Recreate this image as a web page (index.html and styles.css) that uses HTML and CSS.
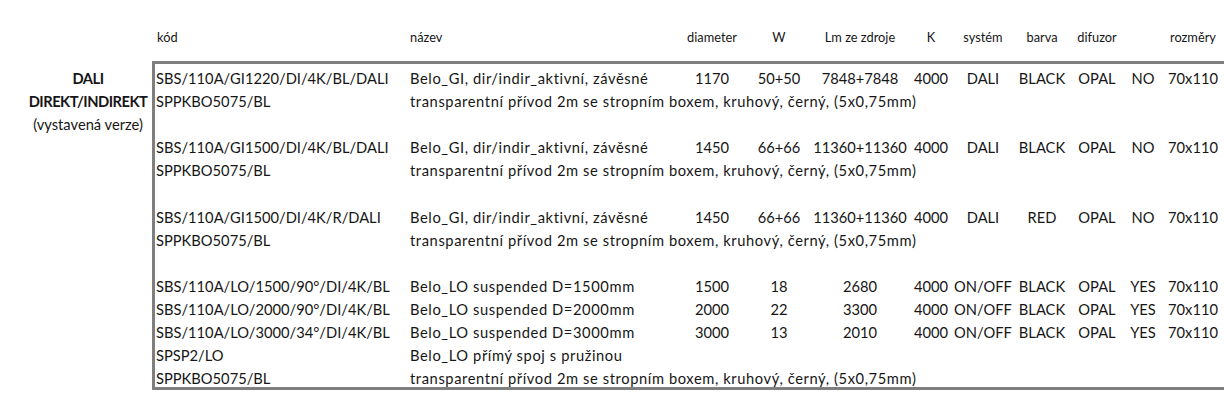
FILE: index.html
```html
<!DOCTYPE html>
<html lang="cs">
<head>
<meta charset="utf-8">
<title>DALI direkt/indirekt</title>
<link rel="stylesheet" href="styles.css">
</head>
<body>
<div class="page">
  <div class="head">
    <div class="h-spacer"></div>
    <div class="h left kod">kód</div>
    <div class="h left naz">název</div>
    <div class="h">diameter</div>
    <div class="h">W</div>
    <div class="h">Lm ze zdroje</div>
    <div class="h">K</div>
    <div class="h">systém</div>
    <div class="h">barva</div>
    <div class="h">difuzor</div>
    <div class="h"></div>
    <div class="h">rozměry</div>
  </div>

  <div class="main">
    <div class="label">
      <div class="lab bold">DALI</div>
      <div class="lab bold">DIREKT/INDIREKT</div>
      <div class="lab">(vystavená verze)</div>
    </div>

    <div class="box">
      <div class="row">
        <div class="c kod">SBS/110A/GI1220/DI/4K/BL/DALI</div>
        <div class="c naz">Belo_GI, dir/indir_aktivní, závěsné</div>
        <div class="c num">1170</div>
        <div class="c num">50+50</div>
        <div class="c num">7848+7848</div>
        <div class="c num">4000</div>
        <div class="c num">DALI</div>
        <div class="c num">BLACK</div>
        <div class="c num">OPAL</div>
        <div class="c num">NO</div>
        <div class="c num">70x110</div>
      </div>
      <div class="row">
        <div class="c kod">SPPKBO5075/BL</div>
        <div class="c naz wide">transparentní přívod 2m se stropním boxem, kruhový, černý, (5x0,75mm)</div>
      </div>
      <div class="row"></div>

      <div class="row">
        <div class="c kod">SBS/110A/GI1500/DI/4K/BL/DALI</div>
        <div class="c naz">Belo_GI, dir/indir_aktivní, závěsné</div>
        <div class="c num">1450</div>
        <div class="c num">66+66</div>
        <div class="c num">11360+11360</div>
        <div class="c num">4000</div>
        <div class="c num">DALI</div>
        <div class="c num">BLACK</div>
        <div class="c num">OPAL</div>
        <div class="c num">NO</div>
        <div class="c num">70x110</div>
      </div>
      <div class="row">
        <div class="c kod">SPPKBO5075/BL</div>
        <div class="c naz wide">transparentní přívod 2m se stropním boxem, kruhový, černý, (5x0,75mm)</div>
      </div>
      <div class="row"></div>

      <div class="row">
        <div class="c kod">SBS/110A/GI1500/DI/4K/R/DALI</div>
        <div class="c naz">Belo_GI, dir/indir_aktivní, závěsné</div>
        <div class="c num">1450</div>
        <div class="c num">66+66</div>
        <div class="c num">11360+11360</div>
        <div class="c num">4000</div>
        <div class="c num">DALI</div>
        <div class="c num">RED</div>
        <div class="c num">OPAL</div>
        <div class="c num">NO</div>
        <div class="c num">70x110</div>
      </div>
      <div class="row">
        <div class="c kod">SPPKBO5075/BL</div>
        <div class="c naz wide">transparentní přívod 2m se stropním boxem, kruhový, černý, (5x0,75mm)</div>
      </div>
      <div class="row"></div>

      <div class="row">
        <div class="c kod">SBS/110A/LO/1500/90°/DI/4K/BL</div>
        <div class="c naz">Belo_LO suspended D=1500mm</div>
        <div class="c num">1500</div>
        <div class="c num">18</div>
        <div class="c num">2680</div>
        <div class="c num">4000</div>
        <div class="c num">ON/OFF</div>
        <div class="c num">BLACK</div>
        <div class="c num">OPAL</div>
        <div class="c num">YES</div>
        <div class="c num">70x110</div>
      </div>
      <div class="row">
        <div class="c kod">SBS/110A/LO/2000/90°/DI/4K/BL</div>
        <div class="c naz">Belo_LO suspended D=2000mm</div>
        <div class="c num">2000</div>
        <div class="c num">22</div>
        <div class="c num">3300</div>
        <div class="c num">4000</div>
        <div class="c num">ON/OFF</div>
        <div class="c num">BLACK</div>
        <div class="c num">OPAL</div>
        <div class="c num">YES</div>
        <div class="c num">70x110</div>
      </div>
      <div class="row">
        <div class="c kod">SBS/110A/LO/3000/34°/DI/4K/BL</div>
        <div class="c naz">Belo_LO suspended D=3000mm</div>
        <div class="c num">3000</div>
        <div class="c num">13</div>
        <div class="c num">2010</div>
        <div class="c num">4000</div>
        <div class="c num">ON/OFF</div>
        <div class="c num">BLACK</div>
        <div class="c num">OPAL</div>
        <div class="c num">YES</div>
        <div class="c num">70x110</div>
      </div>
      <div class="row">
        <div class="c kod">SPSP2/LO</div>
        <div class="c naz wide">Belo_LO přímý spoj s pružinou</div>
      </div>
      <div class="row">
        <div class="c kod">SPPKBO5075/BL</div>
        <div class="c naz wide">transparentní přívod 2m se stropním boxem, kruhový, černý, (5x0,75mm)</div>
      </div>
    </div>
  </div>
</div>
</body>
</html>
```

FILE: styles.css
```css
html, body {
  margin: 0;
  padding: 0;
  background: #ffffff;
}

body {
  width: 1224px;
  height: 401px;
  overflow: hidden;
  font-family: "Lato", "Liberation Sans", sans-serif;
  color: #161616;
}

.page {
  width: 1224px;
}

/* header row */
.head {
  display: grid;
  grid-template-columns: 155px 253px 272px 64px 70px 92px 50px 54px 64px 46px 46px 54px 1fr;
  height: 61px;
  box-sizing: border-box;
  padding-bottom: 16px;
  align-items: end;
  font-size: 12.8px;
  line-height: 15px;
}

.h {
  display: flex;
  justify-content: center;
  white-space: nowrap;
}

.h.left {
  justify-content: flex-start;
}

.h.kod {
  padding-left: 2px;
}

.h.naz {
  padding-left: 2px;
}

/* body */
.main {
  display: grid;
  grid-template-columns: 152px 1fr;
}

.label {
  padding-top: 3px;
  padding-left: 29px;
  padding-right: 5px;
  font-size: 14.7px;
  line-height: 17px;
}

.lab {
  height: 23.1px;
  display: flex;
  align-items: flex-end;
  justify-content: center;
  white-space: nowrap;
}

.lab.bold {
  font-weight: 700;
  letter-spacing: -0.5px;
}

.box {
  border-top: 3px solid #7f7f7f;
  border-left: 3px solid #7f7f7f;
  border-bottom: 3px solid #7f7f7f;
  font-size: 14.7px;
  line-height: 17px;
}

.row {
  display: grid;
  grid-template-columns: 253px 272px 64px 70px 92px 50px 54px 64px 46px 46px 54px 1fr;
  height: 23.1px;
  align-items: end;
}

.c {
  display: flex;
  white-space: nowrap;
}

.c.kod {
  padding-left: 1px;
}

.c.naz {
  padding-left: 2px;
  letter-spacing: 0.6px;
}

.c.wide {
  grid-column: 2 / -1;
}

.c.num {
  justify-content: center;
}
```
